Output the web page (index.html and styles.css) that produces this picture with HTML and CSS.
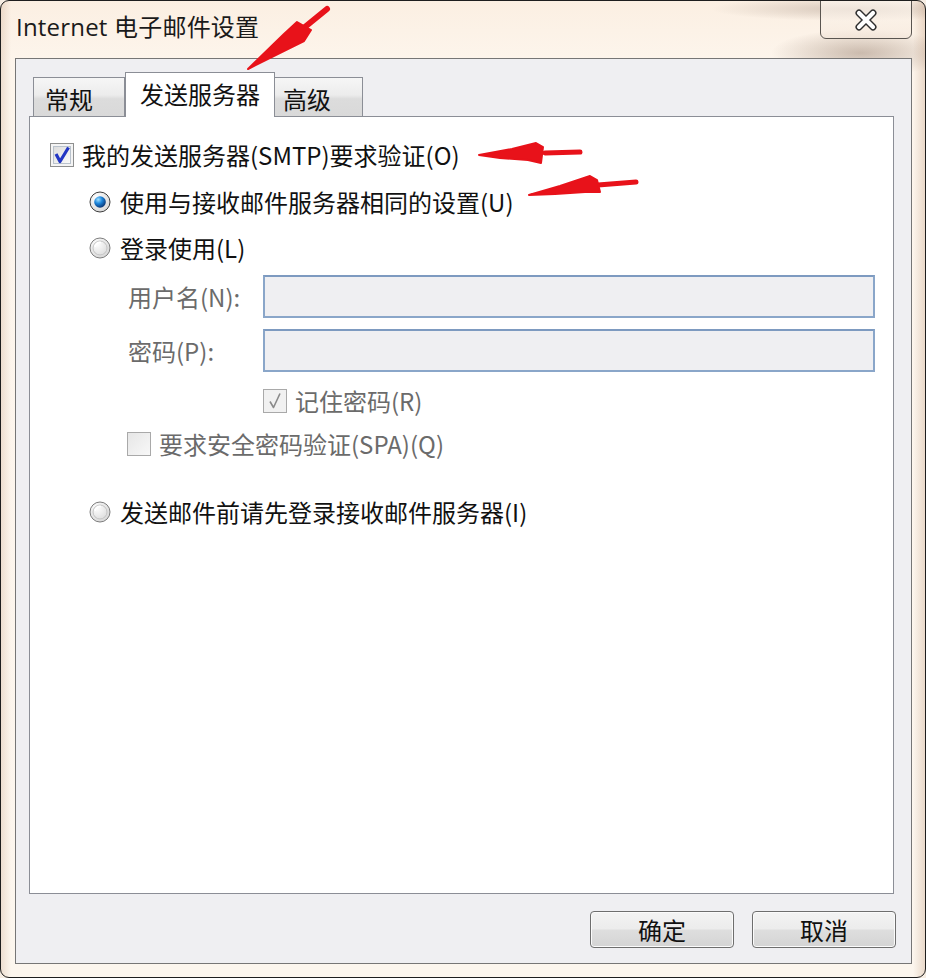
FILE: index.html
```html
<!DOCTYPE html>
<html lang="zh-CN">
<head>
<meta charset="utf-8">
<title>Internet 电子邮件设置</title>
<link rel="stylesheet" href="styles.css">
</head>
<body>
<div class="window">
  <div class="titlebar">
    <span class="title">Internet 电子邮件设置</span>
    <div class="close">
      <svg width="28" height="24" viewBox="0 0 28 24">
        <path d="M7 5 L21 19 M21 5 L7 19" stroke="#2e2e2e" stroke-width="7" stroke-linecap="round" fill="none"/>
        <path d="M7 5 L21 19 M21 5 L7 19" stroke="#ffffff" stroke-width="4.2" stroke-linecap="round" fill="none"/>
      </svg>
    </div>
  </div>
  <div class="client">
    <div class="tabs">
      <div class="tab tab-general">常规</div>
      <div class="tab tab-selected">发送服务器</div>
      <div class="tab tab-advanced">高级</div>
    </div>
    <div class="panel">
      <div class="row row-auth">
        <svg class="box" width="24" height="24" viewBox="0 0 24 24">
          <defs>
            <linearGradient id="cbg" x1="0" y1="0" x2="1" y2="1">
              <stop offset="0" stop-color="#dcdcdc"/>
              <stop offset="1" stop-color="#fbfbfb"/>
            </linearGradient>
          </defs>
          <rect x="0.5" y="0.5" width="23" height="23" fill="#f4f4f4" stroke="#8e8f8f"/>
          <rect x="3.5" y="3.5" width="17" height="17" fill="url(#cbg)" stroke="#b9c2cc"/>
          <path d="M6 11 L10 18.5 L18.5 4.5" stroke="#2236c4" stroke-width="3.2" fill="none" stroke-linejoin="round"/>
        </svg>
        <span class="txt">我的发送服务器(SMTP)要求验证(O)</span>
      </div>
      <div class="row row-radio row-same">
        <svg class="radio" width="22" height="22" viewBox="0 0 22 22">
          <defs>
            <radialGradient id="rdot" cx="0.35" cy="0.3" r="0.75">
              <stop offset="0" stop-color="#9fe0ff"/>
              <stop offset="0.45" stop-color="#1d86dc"/>
              <stop offset="1" stop-color="#08306e"/>
            </radialGradient>
            <radialGradient id="rbg" cx="0.35" cy="0.3" r="0.8">
              <stop offset="0" stop-color="#ffffff"/>
              <stop offset="1" stop-color="#d4d4d4"/>
            </radialGradient>
          </defs>
          <circle cx="11" cy="11" r="10" fill="url(#rbg)" stroke="#3c3c3c"/>
          <circle cx="11" cy="11" r="5.8" fill="url(#rdot)"/>
        </svg>
        <span class="txt">使用与接收邮件服务器相同的设置(U)</span>
      </div>
      <div class="row row-radio row-login">
        <svg class="radio" width="22" height="22" viewBox="0 0 22 22">
          <circle cx="11" cy="11" r="10" fill="url(#rbg)" stroke="#7d7d7d"/>
          <circle cx="11" cy="11" r="7" fill="none" stroke="#c4c4c4"/>
          <path d="M6 10 A5 5 0 0 1 12 5.5" stroke="#ffffff" stroke-width="1.6" fill="none"/>
        </svg>
        <span class="txt">登录使用(L)</span>
      </div>
      <div class="row field row-user">
        <span class="label">用户名(N):</span>
        <div class="input"></div>
      </div>
      <div class="row field row-pass">
        <span class="label">密码(P):</span>
        <div class="input"></div>
      </div>
      <div class="row row-remember">
        <svg class="box" width="24" height="24" viewBox="0 0 24 24">
          <rect x="0.5" y="0.5" width="23" height="23" fill="#f1f1f1" stroke="#a9a9a9"/>
          <path d="M7 12.5 L10.5 18.5 L17 4.5" stroke="#8a8a8a" stroke-width="1.6" fill="none" stroke-linejoin="round"/>
        </svg>
        <span class="txt dim">记住密码(R)</span>
      </div>
      <div class="row row-spa">
        <svg class="box" width="24" height="24" viewBox="0 0 24 24">
          <defs>
            <linearGradient id="spabg" x1="0" y1="0" x2="1" y2="1">
              <stop offset="0" stop-color="#e6e6e6"/>
              <stop offset="1" stop-color="#f8f8f8"/>
            </linearGradient>
          </defs>
          <rect x="0.5" y="0.5" width="23" height="23" fill="url(#spabg)" stroke="#a9a9a9"/>
        </svg>
        <span class="txt dim">要求安全密码验证(SPA)(Q)</span>
      </div>
      <div class="row row-radio row-pop">
        <svg class="radio" width="22" height="22" viewBox="0 0 22 22">
          <circle cx="11" cy="11" r="10" fill="url(#rbg)" stroke="#7d7d7d"/>
          <circle cx="11" cy="11" r="7" fill="none" stroke="#c4c4c4"/>
          <path d="M6 10 A5 5 0 0 1 12 5.5" stroke="#ffffff" stroke-width="1.6" fill="none"/>
        </svg>
        <span class="txt">发送邮件前请先登录接收邮件服务器(I)</span>
      </div>
    </div>
    <div class="buttons">
      <button class="btn">确定</button>
      <button class="btn">取消</button>
    </div>
  </div>
  <svg class="annot" width="926" height="978" viewBox="0 0 926 978">
    <g fill="#e8121a" stroke="#e8121a" stroke-linejoin="round" stroke-linecap="round">
      <path d="M327 9 L300 31" stroke-width="6" fill="none"/>
      <path d="M248 69 L284 34 L297 22 L311 30 L304 41 Z" stroke-width="2"/>
      <path d="M545 153 L580 152" stroke-width="5" fill="none"/>
      <path d="M479 155 L512 149 L536 143 L543 147 L541 163 L528 160 L500 158 Z" stroke-width="2"/>
      <path d="M598 185 L636 182" stroke-width="5" fill="none"/>
      <path d="M529 195 L560 186 L590 176 L597 180 L600 192 L585 192 L555 194 Z" stroke-width="2"/>
    </g>
  </svg>
</div>
</body>
</html>
```

FILE: styles.css
```css
* { box-sizing: border-box; }

html, body {
  margin: 0;
  padding: 0;
  width: 926px;
  height: 978px;
  overflow: hidden;
  background: #f6ede3;
}

body {
  font-family: "Noto Sans CJK SC", "Noto Sans", sans-serif;
  color: #111;
}

.window {
  position: relative;
  width: 926px;
  height: 978px;
  border: 1px solid #1e1e1e;
  border-radius: 9px;
  background:
    radial-gradient(ellipse 90px 24px at 860px 52px, rgba(110, 80, 60, 0.35), rgba(110, 80, 60, 0) 100%),
    radial-gradient(ellipse 140px 12px at 850px 8px, rgba(120, 95, 80, 0.28), rgba(120, 95, 80, 0) 100%),
    linear-gradient(90deg, rgba(190, 150, 120, 0.25) 0, rgba(190, 150, 120, 0) 10px, rgba(0,0,0,0) 912px, rgba(190, 150, 120, 0.3) 100%),
    linear-gradient(180deg, #fbefe2 0, #fdf5ec 60px, #fcf6ee 100%);
  display: flex;
  flex-direction: column;
  overflow: hidden;
}

.titlebar {
  height: 57px;
  display: flex;
  justify-content: space-between;
  align-items: flex-start;
  padding-left: 15px;
  padding-right: 13px;
}

.title {
  margin-top: 11px;
  font-size: 24px;
  line-height: 30px;
  color: #1a1a1a;
  font-family: "Open Sans", "Noto Sans CJK SC", sans-serif;
  letter-spacing: 0.2px;
}

.close {
  width: 92px;
  height: 40px;
  margin-top: -2px;
  border: 1px solid #5a5550;
  border-radius: 0 0 6px 6px;
  background: linear-gradient(180deg, rgba(255,250,244,0.6), rgba(245,232,220,0.6));
  display: flex;
  align-items: center;
  justify-content: center;
  padding-top: 1px;
}

.client {
  flex: 1;
  margin: 0 13px 13px 14px;
  border: 1px solid #767676;
  background: #efeff2;
  padding: 13px 17px 15px 13px;
  display: flex;
  flex-direction: column;
}

.tabs {
  height: 44px;
  display: flex;
  align-items: flex-end;
  padding-left: 4px;
}

.tab {
  height: 39px;
  border: 1px solid #8b8e96;
  border-bottom: none;
  font-size: 24px;
  line-height: 38px;
  color: #111;
  background: linear-gradient(180deg, #f6f6f6 0, #ececec 45%, #dcdcdc 55%, #d9d9d9 100%);
}

.tab-general {
  width: 92px;
  padding-left: 11px;
  padding-top: 2px;
}

.tab-selected {
  position: relative;
  z-index: 1;
  width: 150px;
  height: 45px;
  margin-bottom: -1px;
  background: #ffffff;
  padding-left: 14px;
  line-height: 42px;
}

.tab-advanced {
  width: 88px;
  padding-left: 8px;
  padding-top: 2px;
  border-left: none;
}

.panel {
  flex: 1;
  border: 1px solid #8b8e96;
  background: #ffffff;
  padding: 23px 0 0 20px;
  display: flex;
  flex-direction: column;
}

.row {
  display: flex;
  align-items: center;
  height: 30px;
  font-size: 24px;
  line-height: 30px;
  white-space: nowrap;
}

.box {
  flex: none;
  margin-right: 8px;
}

.radio {
  flex: none;
  margin-right: 9px;
}

.txt { color: #111; }
.dim { color: #6b6b6b; }

.row-radio { margin-left: 39px; }
.row-same { margin-top: 17px; }
.row-login { margin-top: 16px; }
.row-pop { margin-top: 38px; }

.field {
  height: 43px;
  margin-left: 78px;
}
.row-user { margin-top: 12px; }
.row-pass { margin-top: 11px; }

.label {
  width: 135px;
  color: #6b6b6b;
}

.input {
  width: 612px;
  height: 43px;
  border: 2px solid #8aa6c9;
  border-top-color: #7d9ac0;
  background: #efeff2;
}

.row-remember {
  margin-top: 14px;
  margin-left: 213px;
}

.row-spa {
  margin-top: 13px;
  margin-left: 77px;
}

.buttons {
  margin-top: 17px;
  display: flex;
  justify-content: flex-end;
  gap: 18px;
  margin-right: -2px;
}

.btn {
  width: 144px;
  height: 37px;
  border: 1px solid #6e6e6e;
  border-radius: 4px;
  background: linear-gradient(180deg, #f3f3f3 0, #ececec 48%, #dedede 52%, #d4d4d4 100%);
  box-shadow: inset 0 0 0 1px #fbfbfb;
  font-family: "Noto Sans CJK SC", sans-serif;
  font-size: 24px;
  line-height: 30px;
  color: #111;
  padding: 0;
}

.annot {
  position: absolute;
  left: -1px;
  top: -1px;
  pointer-events: none;
}
```
